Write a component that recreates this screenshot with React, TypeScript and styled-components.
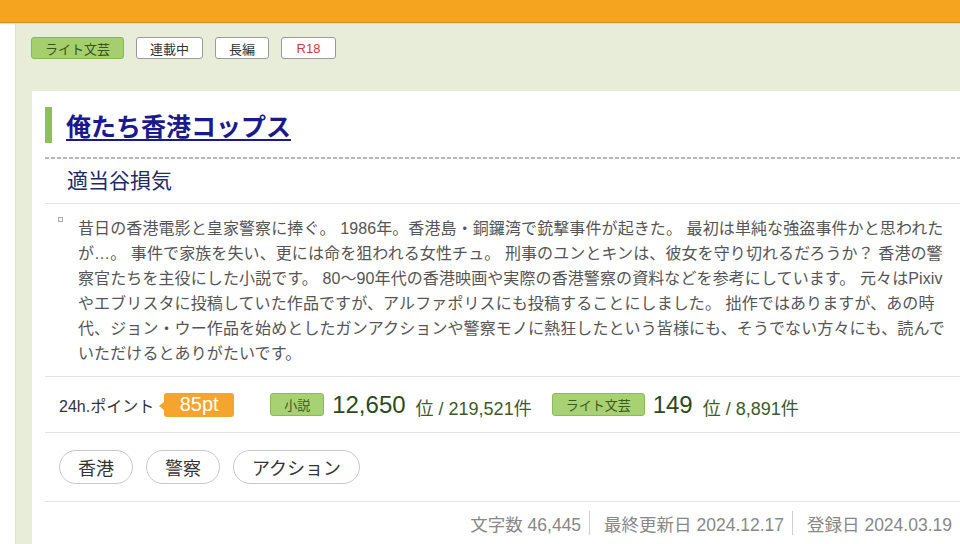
import styled, { createGlobalStyle } from "styled-components";

const GlobalStyle = createGlobalStyle`
  html, body {
    margin: 0;
    padding: 0;
    background: #fff;
    overflow: hidden;
  }
  body {
    font-family: "Liberation Sans", "Noto Sans CJK JP", sans-serif;
  }
`;

const Page = styled.div`
  width: 960px;
  height: 544px;
  overflow: hidden;
  display: flex;
  flex-direction: column;
`;

const TopBar = styled.header`
  height: 22px;
  flex-shrink: 0;
  background: #f5a420;
  border-bottom: 1px solid #d88c1d;
`;

const Body = styled.div`
  flex: 1;
  display: flex;
  border-top: 1px solid #f4dcae;
`;

const SideStrip = styled.div`
  width: 15px;
  background: #fff;
  border-right: 1px solid #dde2cb;
`;

const Main = styled.main`
  flex: 1;
  display: flex;
  flex-direction: column;
  background: #e8edda;
  padding: 13px 0 0 15px;
`;

const TagRow = styled.div`
  display: flex;
  gap: 12px;
`;

const Tag = styled.span<{ $kind?: "genre" | "plain" | "r18" }>`
  height: 22px;
  box-sizing: border-box;
  display: inline-flex;
  align-items: center;
  justify-content: center;
  padding: 0 13px;
  border-radius: 3px;
  font-size: 13px;
  background: ${(p) => (p.$kind === "genre" ? "#a4cf6c" : "#fff")};
  border: 1px solid ${(p) => (p.$kind === "genre" ? "#88b854" : "#9a9a9a")};
  color: ${(p) =>
    p.$kind === "genre" ? "#38531d" : p.$kind === "r18" ? "#d23a3a" : "#333"};
  min-width: ${(p) => (p.$kind === "r18" ? "55px" : "0")};
`;

const Card = styled.section`
  flex: 1;
  margin: 32px 0 0 1px;
  background: #fff;
  padding: 16px 0 0 13px;
  display: flex;
  flex-direction: column;
`;

const TitleRow = styled.div`
  display: flex;
  align-items: center;
  gap: 14px;
  height: 36px;
`;

const TitleBar = styled.span`
  width: 7px;
  height: 36px;
  background: #8dc056;
`;

const Title = styled.a`
  font-size: 25px;
  font-weight: bold;
  color: #1a1a8c;
  text-decoration: underline;
  text-underline-offset: 3px;
`;

const Dashed = styled.div`
  margin-top: 14px;
  height: 2px;
  background: repeating-linear-gradient(
    to right,
    #b8b8b8 0 4px,
    transparent 4px 6px
  );
`;

const Author = styled.div`
  height: 44px;
  line-height: 44px;
  padding-left: 22px;
  font-size: 21px;
  color: #1f2a68;
  border-bottom: 1px solid #e3e3e3;
`;

const Description = styled.div`
  display: flex;
  align-items: flex-start;
  padding: 12px 14px 10px 13px;
  border-bottom: 1px solid #e3e3e3;
`;

const Bullet = styled.span`
  flex-shrink: 0;
  width: 5px;
  height: 5px;
  box-sizing: border-box;
  border: 1px solid #aaa;
  margin-top: 1px;
`;

const DescText = styled.p`
  margin: 0 0 0 15px;
  font-size: 16px;
  letter-spacing: 0.1px;
  line-height: 25px;
  color: #555;
`;

const StatsRow = styled.div`
  height: 55px;
  display: flex;
  align-items: center;
  padding-left: 14px;
  border-bottom: 1px solid #e3e3e3;
`;

const PointLabel = styled.span`
  font-size: 16px;
  color: #333;
`;

const PointBadge = styled.span`
  position: relative;
  margin-left: 10px;
  height: 24px;
  width: 70px;
  display: inline-flex;
  align-items: center;
  justify-content: center;
  background: #f5a52b;
  border-radius: 3px;
  color: #fff;
  font-size: 20px;
  &::before {
    content: "";
    position: absolute;
    left: -5px;
    top: 9px;
    border-style: solid;
    border-width: 4px 5px 4px 0;
    border-color: transparent #f5a52b transparent transparent;
  }
`;

const RankTag = styled.span<{ $gap: number }>`
  margin-left: ${(p) => p.$gap}px;
  height: 23px;
  box-sizing: border-box;
  display: inline-flex;
  align-items: center;
  padding: 0 13px;
  background: #a8d173;
  border: 1px solid #8bbb58;
  border-radius: 3px;
  font-size: 13px;
  color: #3b5a1d;
`;

const RankNum = styled.span`
  margin-left: 8px;
  font-size: 24px;
  color: #2c4a1c;
`;

const RankTotal = styled.span`
  margin-left: 10px;
  font-size: 18px;
  color: #3d5a2a;
  padding-top: 4px;
`;

const KeywordRow = styled.div`
  display: flex;
  gap: 13px;
  padding: 17px 0 17px 14px;
  border-bottom: 1px solid #e3e3e3;
`;

const Keyword = styled.span`
  height: 34px;
  box-sizing: border-box;
  display: inline-flex;
  align-items: center;
  padding: 0 18px;
  border: 1px solid #c9c9c9;
  border-radius: 17px;
  font-size: 18px;
  color: #333;
`;

const Footer = styled.div`
  height: 42px;
  display: flex;
  align-items: center;
  justify-content: flex-end;
  padding-right: 8px;
  font-size: 17.5px;
  color: #888;
`;

const Sep = styled.span`
  width: 1px;
  height: 24px;
  background: #cfcfcf;
  margin: 0 14px 0 8px;
`;

const App = () => {
  return (
    <Page>
      <GlobalStyle />
      <TopBar />
      <Body>
        <SideStrip />
        <Main>
          <TagRow>
            <Tag $kind="genre">ライト文芸</Tag>
            <Tag>連載中</Tag>
            <Tag>長編</Tag>
            <Tag $kind="r18">R18</Tag>
          </TagRow>
          <Card>
            <TitleRow>
              <TitleBar />
              <Title href="#">俺たち香港コップス</Title>
            </TitleRow>
            <Dashed />
            <Author>適当谷損気</Author>
            <Description>
              <Bullet />
              <DescText>
                昔日の香港電影と皇家警察に捧ぐ。 1986年。香港島・銅鑼湾で銃撃事件が起きた。 最初は単純な強盗事件かと思われたが…。 事件で家族を失い、更には命を狙われる女性チュ。 刑事のユンとキンは、彼女を守り切れるだろうか？ 香港の警察官たちを主役にした小説です。 80～90年代の香港映画や実際の香港警察の資料などを参考にしています。 元々はPixivやエブリスタに投稿していた作品ですが、アルファポリスにも投稿することにしました。 拙作ではありますが、あの時代、ジョン・ウー作品を始めとしたガンアクションや警察モノに熱狂したという皆様にも、そうでない方々にも、読んでいただけるとありがたいです。
              </DescText>
            </Description>
            <StatsRow>
              <PointLabel>24h.ポイント</PointLabel>
              <PointBadge>85pt</PointBadge>
              <RankTag $gap={36}>小説</RankTag>
              <RankNum>12,650</RankNum>
              <RankTotal>位 / 219,521件</RankTotal>
              <RankTag $gap={20}>ライト文芸</RankTag>
              <RankNum>149</RankNum>
              <RankTotal>位 / 8,891件</RankTotal>
            </StatsRow>
            <KeywordRow>
              <Keyword>香港</Keyword>
              <Keyword>警察</Keyword>
              <Keyword>アクション</Keyword>
            </KeywordRow>
            <Footer>
              <span>文字数 46,445</span>
              <Sep />
              <span>最終更新日 2024.12.17</span>
              <Sep />
              <span>登録日 2024.03.19</span>
            </Footer>
          </Card>
        </Main>
      </Body>
    </Page>
  );
};

export default App;
